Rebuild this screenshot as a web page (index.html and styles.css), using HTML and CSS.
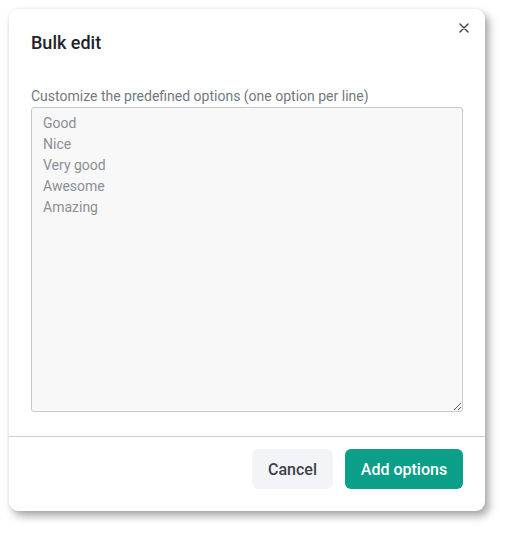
FILE: index.html
```html
<!DOCTYPE html>
<html>
<head>
<meta charset="utf-8">
<link rel="stylesheet" href="styles.css">
</head>
<body>
<div class="dialog">
  <button class="close" aria-label="Close">
    <svg width="10" height="10" viewBox="0 0 10 10"><path d="M1 1L9 9M9 1L1 9" stroke="#3a3f47" stroke-width="1.4" stroke-linecap="round"/></svg>
  </button>
  <div class="header"><h2 class="title">Bulk edit</h2></div>
  <div class="body">
    <label class="label" for="opts">Customize the predefined options (one option per line)</label>
    <textarea id="opts" class="options">Good
Nice
Very good
Awesome
Amazing</textarea>
  </div>
  <div class="footer">
    <button class="btn btn-cancel">Cancel</button>
    <button class="btn btn-primary">Add options</button>
  </div>
</div>
</body>
</html>
```
FILE: styles.css
```css
* { box-sizing: border-box; }
html, body { margin: 0; padding: 0; background: #fff; }
body { font-family: Roboto, "Liberation Sans", sans-serif; min-height: 100vh; padding: 9px 0 0 9px; }
.dialog {
  position: relative;
  width: 476px;
  height: 502px;
  background: #fff;
  border-radius: 9px;
  box-shadow: 4px 5px 8px rgba(0,0,0,0.35), 0 0 3px rgba(0,0,0,0.08);
  display: flex;
  flex-direction: column;
}
.close {
  position: absolute;
  top: 12px;
  right: 14px;
  width: 14px;
  height: 14px;
  padding: 0;
  border: 0;
  background: none;
  display: flex;
  align-items: center;
  justify-content: center;
}
.header { padding: 22px 22px 0; }
.title { margin: 0; font-size: 18px; line-height: 24px; font-weight: 500; color: #1f2329; }
.body { padding: 31px 22px 0; display: flex; flex-direction: column; }
.label { font-size: 14px; line-height: 20px; color: #74787f; }
.options {
  margin: 1px 0 0;
  width: 432px;
  height: 305px;
  background: #f8f8f8;
  border: 1px solid #c9c9c9;
  border-radius: 3px;
  padding: 5px 11px;
  font-family: Roboto, "Liberation Sans", sans-serif;
  font-size: 14px;
  line-height: 21px;
  color: #8b8f96;
  resize: vertical;
  outline: none;
}
.footer {
  margin-top: 24px;
  border-top: 1px solid #cfcfcf;
  padding: 12px 22px 0;
  display: flex;
  justify-content: flex-end;
  gap: 12px;
}
.btn {
  height: 40px;
  border: 0;
  border-radius: 6px;
  font-family: Roboto, "Liberation Sans", sans-serif;
  font-size: 16px;
  font-weight: 500;
  padding: 0;
  white-space: nowrap;
}
.btn-cancel { background: #f3f4f8; color: #3b404c; width: 81px; }
.btn-primary { background: #0b9e89; color: #fff; width: 118px; }
```
